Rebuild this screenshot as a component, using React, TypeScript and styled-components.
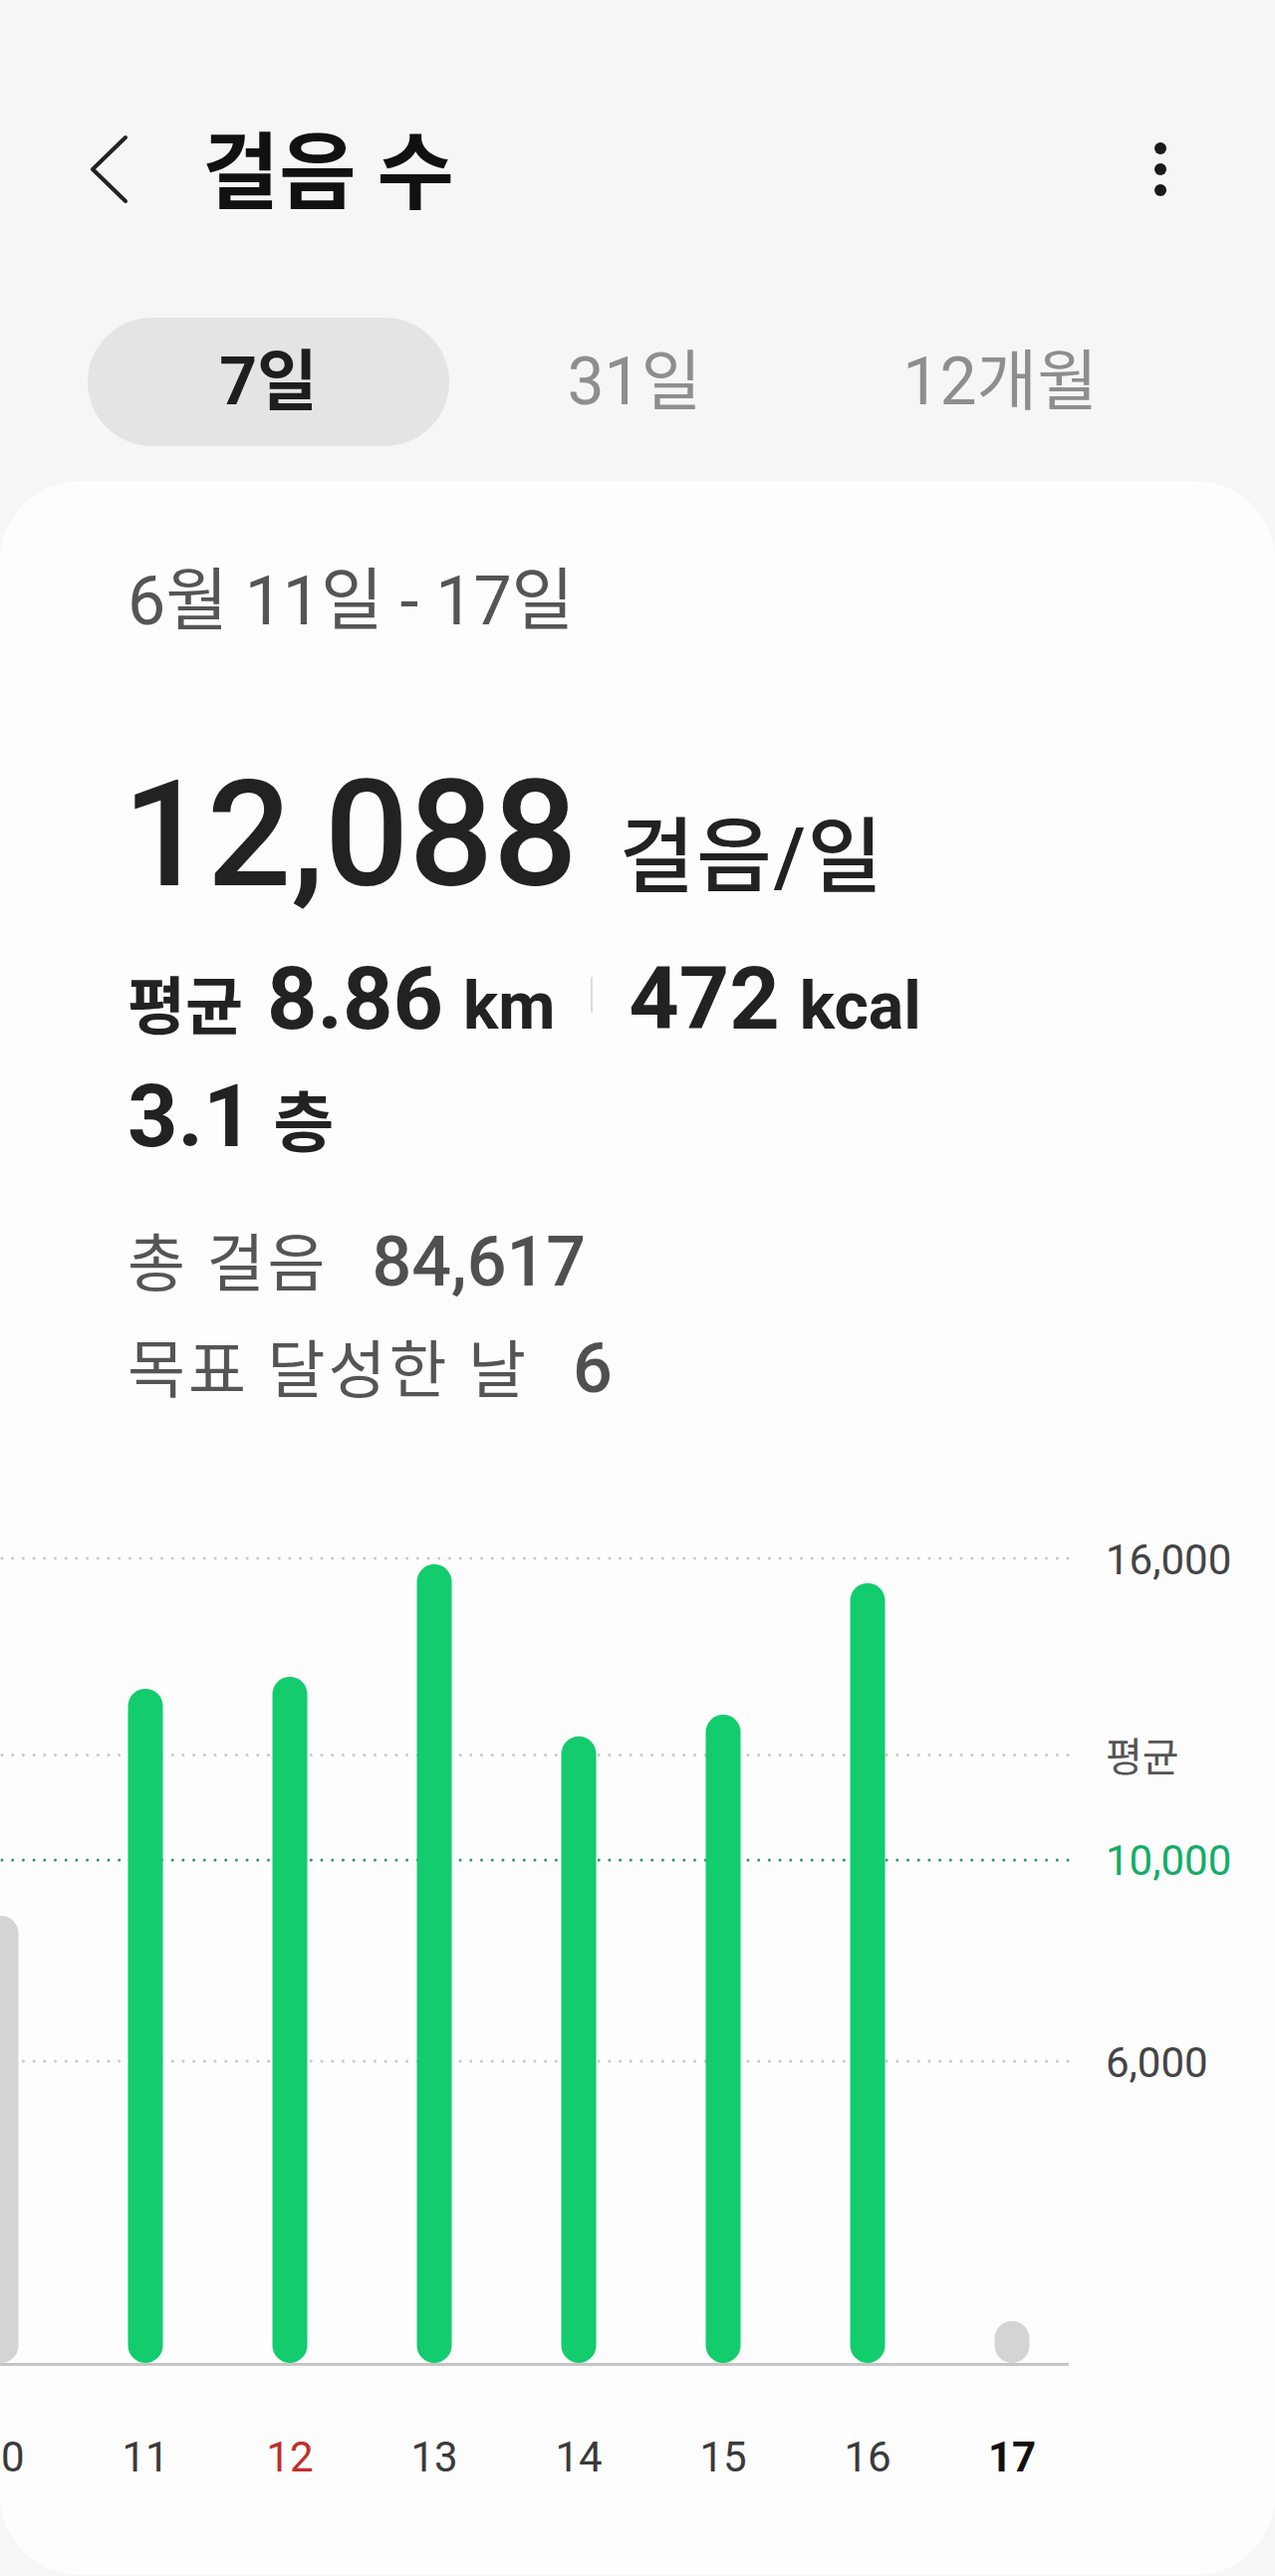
import React from 'react';
import styled, { createGlobalStyle } from 'styled-components';

const GlobalStyle = createGlobalStyle`
	html, body {
		margin: 0;
		padding: 0;
		background: #f6f6f6;
	}
	body {
		font-family: Roboto, "Noto Sans CJK KR", sans-serif;
		color: #222;
	}
`;

const FONT = 'Roboto, "Noto Sans CJK KR", sans-serif';

// chart scale: px per step, baseline at y = 853 inside the svg
const BASE_Y = 853;
const SCALE = 0.0505;
const GOAL = 10000;
const AVERAGE = 12088;

const days = [
	{ day: '10', steps: 8891 },
	{ day: '11', steps: 13406 },
	{ day: '12', steps: 13644, tone: 'holiday' },
	{ day: '13', steps: 15881 },
	{ day: '14', steps: 12458 },
	{ day: '15', steps: 12891 },
	{ day: '16', steps: 15505 },
	{ day: '17', steps: 832, tone: 'today' },
];

const COL = 145;
const FIRST_X = 1;

const yOf = (v: number) => BASE_Y - v * SCALE;

const Page = styled.div`
	width: 1280px;
	display: flex;
	flex-direction: column;
`;

const TopBar = styled.header`
	display: flex;
	align-items: center;
	height: 130px;
	margin-top: 105px;
	padding-left: 88px;
	padding-right: 109px;
`;

const BackButton = styled.button`
	display: flex;
	border: none;
	background: none;
	padding: 0;
	width: 44px;
	height: 72px;
`;

const Title = styled.h1`
	margin: 0 0 0 71px;
	padding-top: 10px;
	font-size: 84px;
	line-height: 84px;
	font-weight: 700;
	color: #111;
`;

const Kebab = styled.div`
	margin-left: auto;
	display: flex;
	flex-direction: column;
	gap: 9px;
`;

const Dot = styled.span`
	width: 12px;
	height: 12px;
	border-radius: 50%;
	background: #1a1a1a;
`;

const Tabs = styled.nav`
	display: grid;
	grid-template-columns: repeat(3, 1fr);
	margin-top: 84px;
	padding: 0 90px 0 88px;
`;

const Tab = styled.div<{ $active?: boolean }>`
	width: 363px;
	height: 129px;
	border-radius: 65px;
	display: flex;
	align-items: center;
	justify-content: center;
	font-size: 66px;
	line-height: 1;
	font-weight: ${(p) => (p.$active ? 700 : 400)};
	color: ${(p) => (p.$active ? '#1e1e1e' : '#8e8e8e')};
	background: ${(p) => (p.$active ? '#e4e4e4' : 'transparent')};
`;

const Card = styled.section`
	margin-top: 35px;
	background: #fdfdfd;
	border-radius: 80px;
	overflow: hidden;
	padding: 81px 0 97px;
	display: flex;
	flex-direction: column;
`;

const Summary = styled.div`
	padding-left: 128px;
	display: flex;
	flex-direction: column;
`;

const DateRange = styled.div`
	font-size: 68px;
	line-height: 80px;
	color: #555;
`;

const BigRow = styled.div`
	display: flex;
	align-items: baseline;
	margin-top: 121px;
`;

const BigNumber = styled.span`
	font-size: 149px;
	line-height: 146px;
	font-weight: 500;
	color: #222;
	margin-left: -5px;
`;

const BigUnit = styled.span`
	font-size: 82px;
	line-height: 1;
	font-weight: 500;
	letter-spacing: 2px;
	color: #222;
	margin-left: 42px;
`;

const StatRow = styled.div<{ $gap: number }>`
	display: flex;
	align-items: baseline;
	margin-top: ${(p) => p.$gap}px;
	color: #222;
`;

const StatLabel = styled.span`
	font-size: 63px;
	line-height: 1;
	font-weight: 700;
	margin-right: 24px;
`;

const StatValue = styled.span`
	font-size: 88px;
	line-height: 1;
	font-weight: 700;
`;

const StatUnit = styled.span`
	font-size: 66px;
	line-height: 1;
	font-weight: 700;
	margin-left: 20px;
`;

const Divider = styled.span`
	align-self: center;
	width: 2px;
	height: 36px;
	background: #dcdcdc;
	margin: 0 36px 0 36px;
	position: relative;
	top: -4px;
`;

const TotalRow = styled.div<{ $gap: number }>`
	display: flex;
	align-items: baseline;
	margin-top: ${(p) => p.$gap}px;
	color: #555;
`;

const TotalLabel = styled.span`
	font-size: 63px;
	line-height: 1;
	font-weight: 400;
	letter-spacing: 3px;
	margin-right: 44px;
`;

const TotalValue = styled.span`
	font-size: 70px;
	line-height: 1;
	font-weight: 500;
	color: #505050;
`;

const ChartSvg = styled.svg`
	display: block;
	margin-top: 111px;
	font-family: ${FONT};
`;

const DayRow = styled.div`
	display: flex;
	margin-top: 57px;
	margin-left: ${FIRST_X - COL / 2}px;
`;

const DayLabel = styled.span<{ $tone?: string }>`
	flex: 0 0 ${COL}px;
	text-align: center;
	font-size: 42px;
	line-height: 1;
	font-weight: ${(p) => (p.$tone === 'today' ? 700 : 400)};
	color: ${(p) =>
		p.$tone === 'holiday' ? '#c0302b' : p.$tone === 'today' ? '#111' : '#3a3a3a'};
`;

const GridLine = ({ y, color }: { y: number; color: string }) => (
	<line
		x1={2}
		x2={1072}
		y1={y}
		y2={y}
		stroke={color}
		strokeWidth={3}
		strokeLinecap="round"
		strokeDasharray="0 10.7"
	/>
);

const StepsChart = () => (
	<ChartSvg width={1280} height={870} viewBox="0 0 1280 870">
		<GridLine y={yOf(16000)} color="#c8c8c8" />
		<GridLine y={yOf(AVERAGE)} color="#c8c8c8" />
		<GridLine y={yOf(GOAL)} color="#1f9d63" />
		<GridLine y={yOf(6000)} color="#c8c8c8" />

		{days.map((d, i) => {
			const h = d.steps * SCALE;
			const cx = FIRST_X + COL * i;
			return (
				<rect
					key={d.day}
					x={cx - 17.5}
					y={BASE_Y - h}
					width={35}
					height={h}
					rx={17.5}
					fill={d.steps >= GOAL ? '#12cc6e' : '#d4d4d4'}
				/>
			);
		})}
		<rect x={0} y={BASE_Y} width={1073} height={3} fill="#c6c6c6" />

		<text x={1110} y={yOf(16000) + 16} fontSize={42} fill="#444">
			16,000
		</text>
		<text x={1110} y={yOf(AVERAGE) + 16} fontSize={40} fill="#555">
			평균
		</text>
		<text x={1110} y={yOf(GOAL) + 15} fontSize={42} fill="#13ad67">
			10,000
		</text>
		<text x={1110} y={yOf(6000) + 16} fontSize={42} fill="#444">
			6,000
		</text>
	</ChartSvg>
);

const App = () => {
	return (
		<Page>
			<GlobalStyle />
			<TopBar>
				<BackButton aria-label="뒤로">
					<svg width="44" height="72" viewBox="0 0 44 72">
						<path
							d="M38 4 L5 36 L38 68"
							fill="none"
							stroke="#222"
							strokeWidth={4}
							strokeLinecap="round"
							strokeLinejoin="round"
						/>
					</svg>
				</BackButton>
				<Title>걸음 수</Title>
				<Kebab>
					<Dot />
					<Dot />
					<Dot />
				</Kebab>
			</TopBar>

			<Tabs>
				<Tab $active>7일</Tab>
				<Tab>31일</Tab>
				<Tab>12개월</Tab>
			</Tabs>

			<Card>
				<Summary>
					<DateRange>6월 11일 - 17일</DateRange>
					<BigRow>
						<BigNumber>12,088</BigNumber>
						<BigUnit>걸음/일</BigUnit>
					</BigRow>
					<StatRow $gap={48}>
						<StatLabel>평균</StatLabel>
						<StatValue>8.86</StatValue>
						<StatUnit>km</StatUnit>
						<Divider />
						<StatValue>472</StatValue>
						<StatUnit>kcal</StatUnit>
					</StatRow>
					<StatRow $gap={30}>
						<StatValue>3.1</StatValue>
						<StatUnit>층</StatUnit>
					</StatRow>
					<TotalRow $gap={67}>
						<TotalLabel>총 걸음</TotalLabel>
						<TotalValue>84,617</TotalValue>
					</TotalRow>
					<TotalRow $gap={37}>
						<TotalLabel>목표 달성한 날</TotalLabel>
						<TotalValue>6</TotalValue>
					</TotalRow>
				</Summary>

				<StepsChart />

				<DayRow>
					{days.map((d) => (
						<DayLabel key={d.day} $tone={d.tone}>
							{d.day}
						</DayLabel>
					))}
				</DayRow>
			</Card>
		</Page>
	);
};

export default App;
